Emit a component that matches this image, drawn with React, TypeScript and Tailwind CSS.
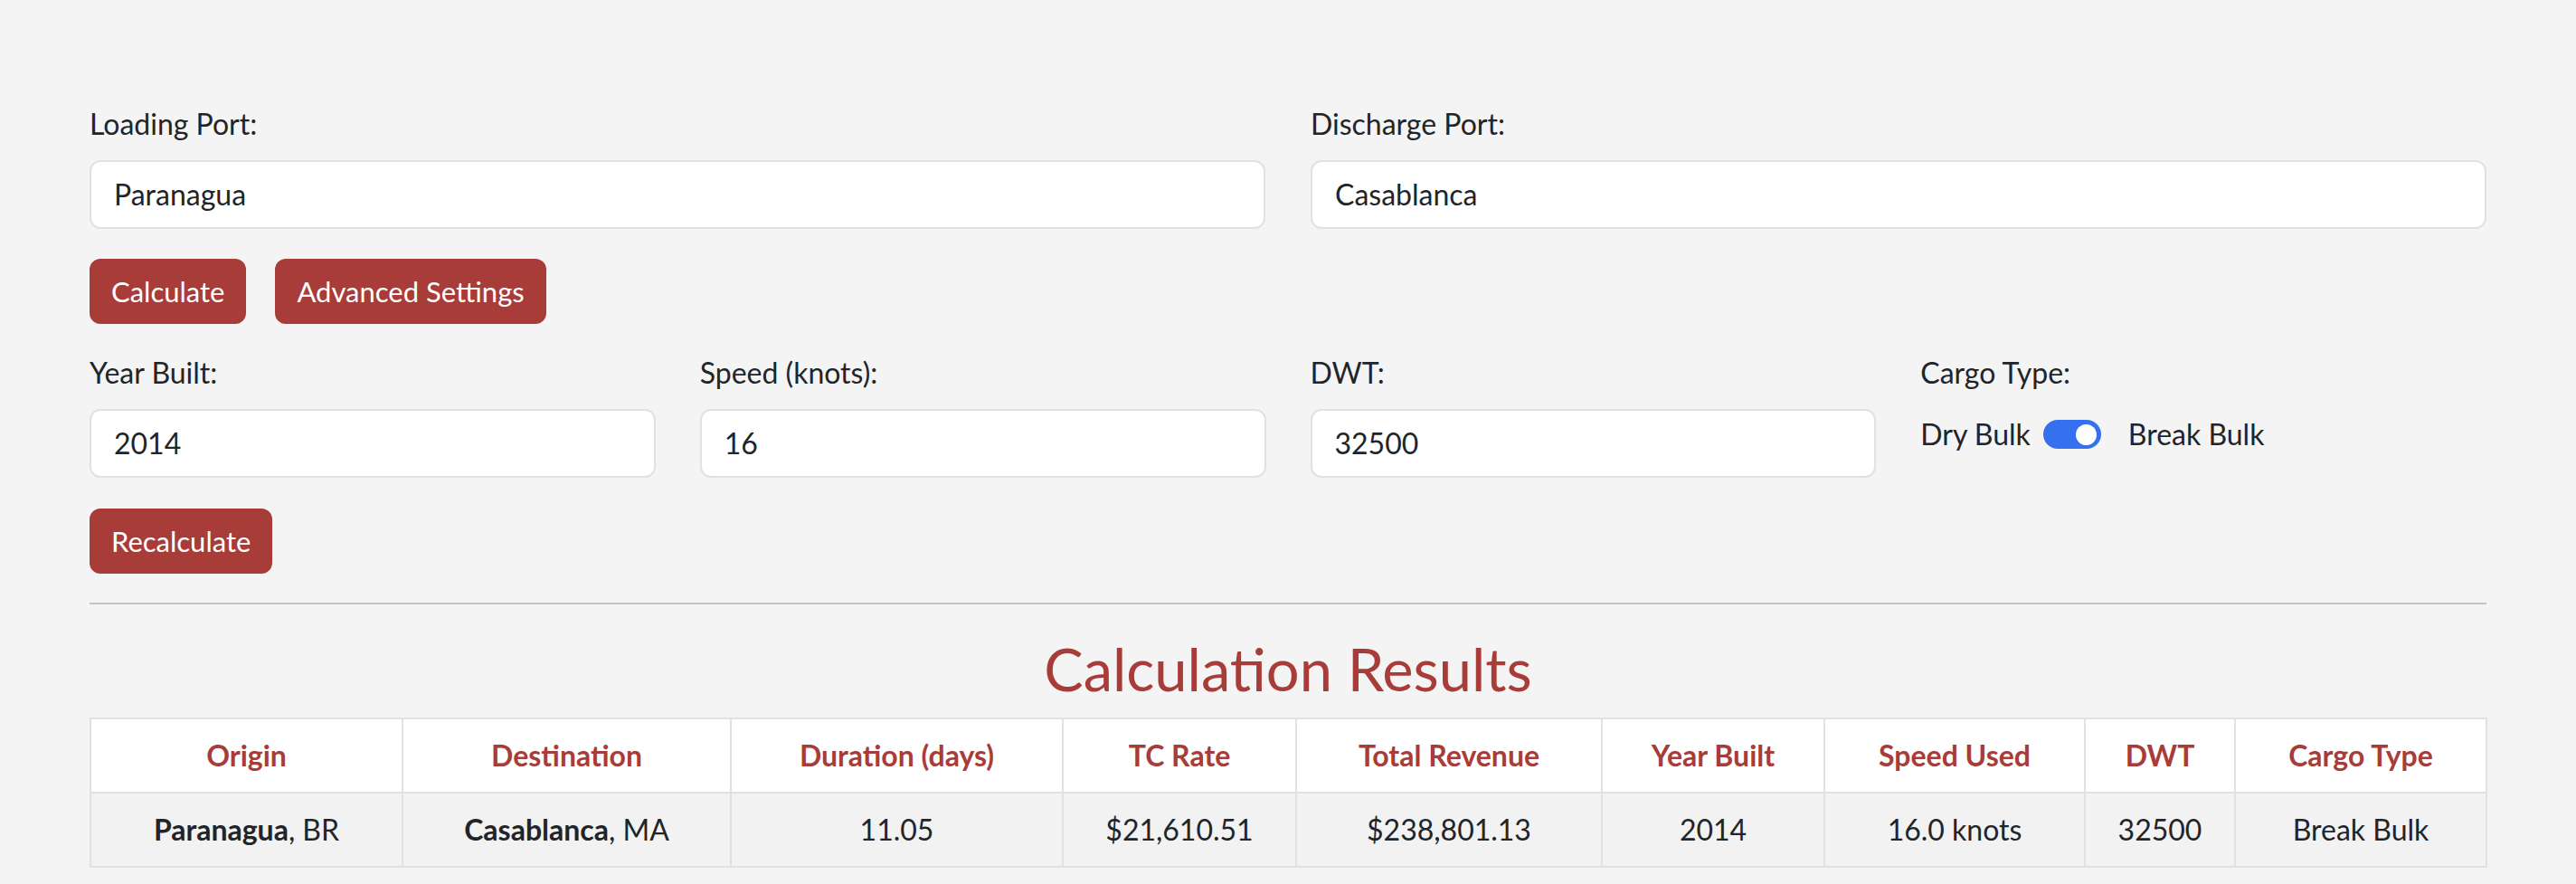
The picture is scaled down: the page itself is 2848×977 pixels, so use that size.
import React from "react";

const F = { fontFamily: "Lato, 'Noto Sans', sans-serif" };

function Field({ label, value }: { label: string; value: string }) {
  return (
    <div className="flex flex-col">
      <label className="text-[32px] leading-[48px] text-[#212529] mb-[16px]">{label}</label>
      <div className="h-[76px] rounded-[12px] border-2 border-[#dee2e6] bg-white px-[25px] flex items-center text-[32px] text-[#212529]">
        {value}
      </div>
    </div>
  );
}

function Btn({ children }: { children: React.ReactNode }) {
  return (
    <button className="h-[72px] px-[24px] rounded-[12px] bg-[#a83c38] text-white text-[31px] leading-[48px]">
      {children}
    </button>
  );
}

const cols = [
  { h: "Origin", w: "w-[345px]" },
  { h: "Destination", w: "w-[363px]" },
  { h: "Duration (days)", w: "w-[367px]" },
  { h: "TC Rate", w: "w-[258px]" },
  { h: "Total Revenue", w: "w-[338px]" },
  { h: "Year Built", w: "w-[246px]" },
  { h: "Speed Used", w: "w-[288px]" },
  { h: "DWT", w: "w-[166px]" },
  { h: "Cargo Type", w: "w-[278px]" },
];

export default function App() {
  const cell = "border-2 border-[#dee2e6] px-[16px] py-[16px] text-center text-[32px] leading-[48px]";
  return (
    <div className="min-h-[977px] w-full bg-[#f4f4f4] text-[#212529]" style={F}>
      <div className="mx-auto w-[2650px] pt-[113px]">
        <div className="grid grid-cols-2 gap-x-[50px]">
          <Field label="Loading Port:" value="Paranagua" />
          <Field label="Discharge Port:" value="Casablanca" />
        </div>
        <div className="mt-[33px] flex gap-[32px]">
          <Btn>Calculate</Btn>
          <Btn>Advanced Settings</Btn>
        </div>
        <div className="mt-[30px] grid grid-cols-4 gap-x-[49px]">
          <Field label="Year Built:" value="2014" />
          <Field label="Speed (knots):" value="16" />
          <Field label="DWT:" value="32500" />
          <div className="flex flex-col">
            <label className="text-[32px] leading-[48px] mb-[20px]">Cargo Type:</label>
            <div className="flex items-center text-[32px] leading-[48px]">
              <span>Dry Bulk</span>
              <span className="ml-[14px] inline-flex h-[32px] w-[64px] items-center justify-end rounded-full bg-[#3570ef] pr-[5px]">
                <span className="h-[23px] w-[23px] rounded-full bg-white" />
              </span>
              <span className="ml-[30px]">Break Bulk</span>
            </div>
          </div>
        </div>
        <div className="mt-[34px]">
          <Btn>Recalculate</Btn>
        </div>
        <hr className="mt-[32px] border-0 h-[2px] bg-[#c2c2c2]" />
        <h2 className="mt-[31px] mb-[14px] text-center text-[65px] leading-[80px] text-[#a83c38]">Calculation Results</h2>
        <table className="w-full table-fixed border-collapse border-2 border-[#dee2e6]">
          <colgroup>
            {cols.map((c) => (
              <col key={c.h} className={c.w} />
            ))}
          </colgroup>
          <thead>
            <tr className="bg-white">
              {cols.map((c) => (
                <th key={c.h} className={cell + " font-bold text-[#a83c38]"}>
                  {c.h}
                </th>
              ))}
            </tr>
          </thead>
          <tbody>
            <tr className="bg-[#f2f2f2]">
              <td className={cell}>
                <b>Paranagua</b>, BR
              </td>
              <td className={cell}>
                <b>Casablanca</b>, MA
              </td>
              <td className={cell}>11.05</td>
              <td className={cell}>$21,610.51</td>
              <td className={cell}>$238,801.13</td>
              <td className={cell}>2014</td>
              <td className={cell}>16.0 knots</td>
              <td className={cell}>32500</td>
              <td className={cell}>Break Bulk</td>
            </tr>
          </tbody>
        </table>
      </div>
    </div>
  );
}
